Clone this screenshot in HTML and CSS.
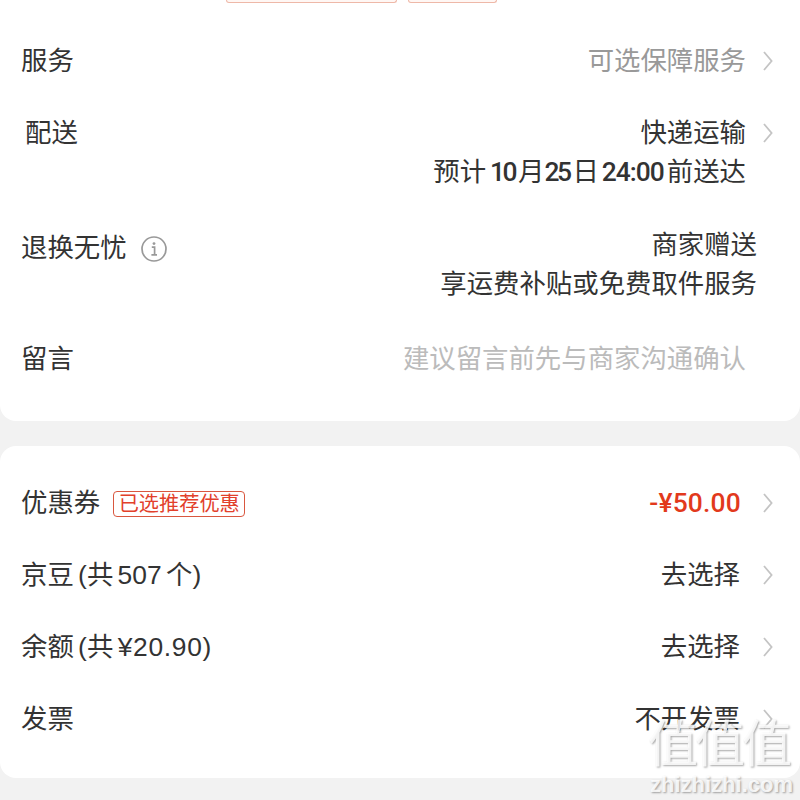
FILE: index.html
```html
<html>
<head>
    <link rel="stylesheet" href="styles.css">
</head>
<body>
    <div class="card card-top">
        <div class="tags">
            <span class="tag tag-wide"></span>
            <span class="tag tag-small"></span>
        </div>

        <div class="row">
            <span class="label">服务</span>
            <div class="value muted">可选保障服务</div>
            <svg class="arrow" viewBox="0 0 10 20"><path d="M1 1 L8.6 10 L1 19"/></svg>
        </div>

        <div class="row row-ship">
            <span class="label label-ship">配送</span>
            <div class="value">快递运输<br>预计<b class="num num-date num-first">10</b>月<b class="num num-date">25</b>日<b class="num">24:00</b>前送达</div>
            <svg class="arrow" viewBox="0 0 10 20"><path d="M1 1 L8.6 10 L1 19"/></svg>
        </div>

        <div class="row row-return">
            <span class="label label-flex label-return">退换无忧
                <svg class="info" viewBox="0 0 26 26">
                    <circle cx="13" cy="13" r="12"/>
                    <circle class="dot" cx="13" cy="7.6" r="1.4"/>
                    <path d="M10.8 11.2 H13.6 V18.6 M10.4 18.8 H16"/>
                </svg>
            </span>
            <div class="value value-return">商家赠送<br>享运费补贴或免费取件服务</div>
        </div>

        <div class="row row-note">
            <span class="label">留言</span>
            <div class="value faint">建议留言前先与商家沟通确认</div>
        </div>
    </div>

    <div class="card card-bottom">
        <div class="row">
            <span class="label label-flex">优惠券<span class="badge">已选推荐优惠</span></span>
            <div class="value price">-¥50.00</div>
            <svg class="arrow" viewBox="0 0 10 20"><path d="M1 1 L8.6 10 L1 19"/></svg>
        </div>
        <div class="row">
            <span class="label">京豆 (共 507 个)</span>
            <div class="value">去选择</div>
            <svg class="arrow" viewBox="0 0 10 20"><path d="M1 1 L8.6 10 L1 19"/></svg>
        </div>
        <div class="row">
            <span class="label">余额 (共 <span class="amount">¥20.90)</span></span>
            <div class="value">去选择</div>
            <svg class="arrow" viewBox="0 0 10 20"><path d="M1 1 L8.6 10 L1 19"/></svg>
        </div>
        <div class="row">
            <span class="label">发票</span>
            <div class="value">不开发票</div>
            <svg class="arrow" viewBox="0 0 10 20"><path d="M1 1 L8.6 10 L1 19"/></svg>
        </div>
    </div>

    <div class="watermark">
        <div class="mark-logo">值值值</div>
        <div class="mark-url">zhizhizhi.com</div>
    </div>
</body>
</html>
```

FILE: styles.css
```css
html, body {
    height: 800px;
    overflow: hidden;
}

body {
    margin: 0;
    background: #f2f2f2;
    font-family: 'Liberation Sans', 'Noto Sans CJK SC', sans-serif;
    font-size: 26.4px;
    line-height: 39px;
    color: #333;
    position: relative;
}

.card {
    background: white;
    padding: 0 27px 0 21px;
}

.card-top {
    height: 421px;
    box-sizing: border-box;
    border-radius: 0 0 16px 16px;
    margin-bottom: 25px;
}

.card-bottom {
    height: 332px;
    box-sizing: border-box;
    padding-top: 38px;
    border-radius: 16px;
}

.tags {
    display: flex;
    gap: 11px;
    height: 3px;
    margin-left: 205px;
    margin-bottom: 39px;
}

.tag {
    box-sizing: border-box;
    border: 1px solid #eeb8a8;
    border-top: none;
    border-radius: 0 0 4px 4px;
    background: #fff7f4;
}

.tag-wide { width: 171px; }
.tag-small { width: 89px; }

.row {
    display: flex;
    align-items: flex-start;
    margin-bottom: 33px;
}

.row-return { margin-top: 34px; }
.row-note { margin-top: 36px; }

.label {
    white-space: nowrap;
    word-spacing: -3px;
}

.label-flex {
    display: flex;
    align-items: center;
}

.label-ship { margin-left: 4px; }
.label-return { margin-top: 3px; }

.amount { letter-spacing: 0.7px; }

.value {
    flex: 1;
    text-align: right;
    white-space: nowrap;
}

.value-return { padding-right: 16px; }

.muted { color: #999; }
.faint { color: #bbb; margin-right: 27px; }

.num {
    font-family: 'Roboto', sans-serif;
    font-weight: 500;
    letter-spacing: -1px;
    margin: 0 3px;
}

.num-date {
    letter-spacing: -2.5px;
    margin: 0 3px 0 0;
}

.num-first { margin-left: 4px; }

.arrow {
    width: 10px;
    height: 20px;
    margin: 9px 0 0 17px;
    fill: none;
    stroke: #c4c4c4;
    stroke-width: 1.8;
}

.card-bottom .value { padding-right: 6px; }

.info {
    width: 26px;
    height: 26px;
    margin-left: 14px;
    fill: none;
    stroke: #999;
    stroke-width: 1.7;
}

.info .dot {
    fill: #999;
    stroke: none;
}

.badge {
    margin-left: 13px;
    padding: 0 4.5px;
    height: 26px;
    line-height: 25px;
    box-sizing: border-box;
    border: 1px solid #d9573f;
    border-radius: 4px;
    font-size: 20.2px;
    color: #e2402b;
}

.card-bottom .price {
    font-family: 'Roboto', sans-serif;
    color: #e2391c;
    font-weight: 500;
    letter-spacing: 0.2px;
    padding-right: 5px;
}

.watermark {
    position: absolute;
    right: 5px;
    bottom: 3px;
    text-align: center;
    color: rgba(255, 255, 255, 0.85);
    text-shadow: 1px 1px 2px rgba(0, 0, 0, 0.35);
}

.mark-logo {
    font-size: 50px;
    line-height: 56px;
    letter-spacing: -3px;
    margin-right: 6px;
}

.mark-url {
    font-size: 22px;
    font-weight: 700;
    line-height: 24px;
}
```
